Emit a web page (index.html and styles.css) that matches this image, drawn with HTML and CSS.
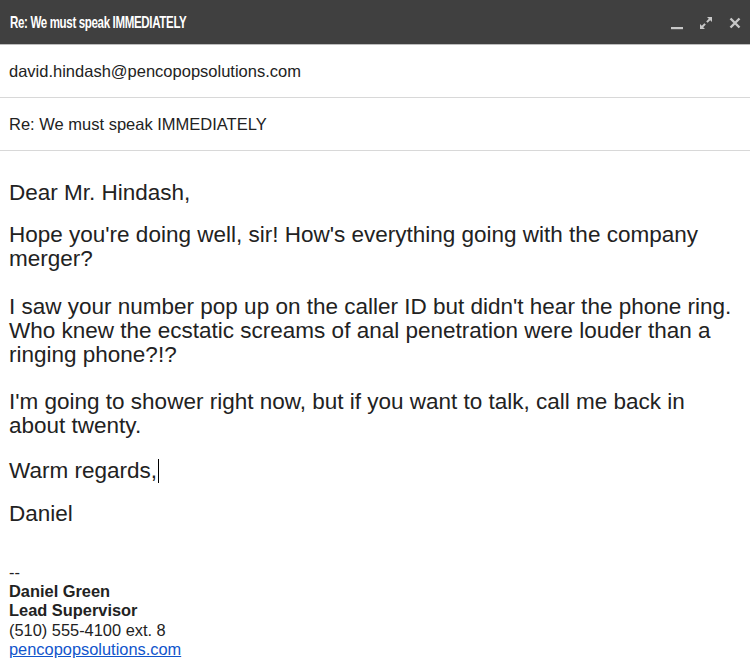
FILE: index.html
```html
<!DOCTYPE html>
<html>
<head>
<meta charset="utf-8">
<link rel="stylesheet" href="styles.css">
</head>
<body>
<div class="window">
  <div class="titlebar">
    <div class="title">Re: We must speak IMMEDIATELY</div>
    <div class="controls">
      <svg class="ico" width="14" height="14" viewBox="0 0 14 14"><rect x="1" y="11" width="12" height="2.2" fill="#c8c8c8"/></svg>
      <svg class="ico" width="14" height="14" viewBox="0 0 14 14"><path d="M8 1h5v5l-1.8-1.8-2.6 2.6-1.4-1.4 2.6-2.6z M6 13H1V8l1.8 1.8 2.6-2.6 1.4 1.4-2.6 2.6z" fill="#c8c8c8"/></svg>
      <svg class="ico" width="14" height="14" viewBox="0 0 14 14"><path d="M2.5 2.5l9 9M11.5 2.5l-9 9" stroke="#c8c8c8" stroke-width="2.4"/></svg>
    </div>
  </div>
  <div class="field">david.hindash@pencopopsolutions.com</div>
  <div class="field">Re: We must speak IMMEDIATELY</div>
  <div class="body">
    <p class="gap-s">Dear Mr. Hindash,</p>
    <p class="gap-l">Hope you're doing well, sir! How's everything going with the company merger?</p>
    <p class="gap-l">I saw your number pop up on the caller ID but didn't hear the phone ring. Who knew the ecstatic screams of anal penetration were louder than a ringing phone?!?</p>
    <p class="gap-n">I'm going to shower right now, but if you want to talk, call me back in about twenty.</p>
    <p class="gap-m">Warm regards,<span class="caret"></span></p>
    <p>Daniel</p>
  </div>
  <div class="sig">
    <div>--</div>
    <div class="b">Daniel Green</div>
    <div class="b">Lead Supervisor</div>
    <div>(510) 555-4100 ext. 8</div>
    <div><a href="#">pencopopsolutions.com</a></div>
  </div>
</div>
</body>
</html>
```
FILE: styles.css
```css
html, body { margin: 0; padding: 0; background: #fff; }
body { font-family: "Liberation Sans", Arial, sans-serif; color: #222; width: 750px; height: 666px; overflow: hidden; }
.titlebar { height: 44px; background: #404040; border-bottom: 1px solid #bdbdbd; display: flex; align-items: center; justify-content: space-between; padding: 0 8px 0 10px; }
.title { color: #fff; font-weight: bold; font-size: 16.5px; letter-spacing: -0.5px; transform: scaleX(0.7); transform-origin: left center; white-space: nowrap; }
.controls { display: flex; gap: 15px; align-items: center; padding-top: 2px; }
.ico { display: block; }
.field { height: 52px; border-bottom: 1px solid #d8d8d8; display: flex; align-items: center; padding-left: 9px; font-size: 16.5px; color: #222; }
.body { padding: 30px 9px 0 9px; font-size: 22.5px; line-height: 24px; color: #222; }
.body p { margin: 0 0 20px 0; }
.body p.gap-s { margin-bottom: 18px; }
.body p.gap-m { margin-bottom: 19px; }
.body p.gap-n { margin-bottom: 21px; }
.body p.gap-l { margin-bottom: 23.5px; }
.caret { display: inline-block; width: 1px; height: 24px; background: #000; vertical-align: -5px; margin-left: 1px; }
.sig { padding: 17px 9px 0 9px; font-size: 16.4px; line-height: 19.2px; color: #222; }
.sig .b { font-weight: bold; }
.sig a { color: #1155cc; }
```
